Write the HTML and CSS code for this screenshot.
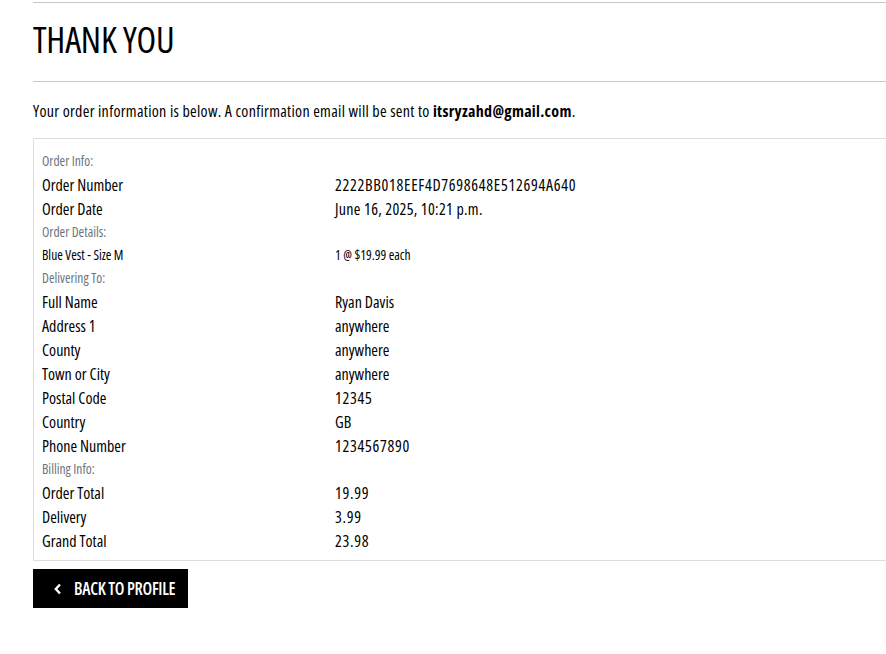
FILE: index.html
```html
<!DOCTYPE html>
<html>
<head>
<meta charset="utf-8">
<link rel="stylesheet" href="styles.css">
</head>
<body>
<div class="page">
  <hr class="rule rule-top">
  <h1 class="title">THANK YOU</h1>
  <hr class="rule rule-mid">
  <p class="intro">Your order information is below. A confirmation email will be sent to <strong>itsryzahd@gmail.com</strong>.</p>
  <div class="box">
    <div class="sec">Order Info:</div>
    <div class="row"><span class="k">Order Number</span><span class="v num">2222BB018EEF4D7698648E512694A640</span></div>
    <div class="row"><span class="k">Order Date</span><span class="v date">June 16, 2025, 10:21 p.m.</span></div>
    <div class="sec">Order Details:</div>
    <div class="row small"><span class="k">Blue Vest - Size M</span><span class="v">1 @ $19.99 each</span></div>
    <div class="sec">Delivering To:</div>
    <div class="row"><span class="k">Full Name</span><span class="v">Ryan Davis</span></div>
    <div class="row"><span class="k">Address 1</span><span class="v">anywhere</span></div>
    <div class="row"><span class="k">County</span><span class="v">anywhere</span></div>
    <div class="row"><span class="k">Town or City</span><span class="v">anywhere</span></div>
    <div class="row"><span class="k">Postal Code</span><span class="v num">12345</span></div>
    <div class="row"><span class="k">Country</span><span class="v">GB</span></div>
    <div class="row"><span class="k">Phone Number</span><span class="v num">1234567890</span></div>
    <div class="sec">Billing Info:</div>
    <div class="row"><span class="k">Order Total</span><span class="v num">19.99</span></div>
    <div class="row"><span class="k">Delivery</span><span class="v num">3.99</span></div>
    <div class="row"><span class="k">Grand Total</span><span class="v num">23.98</span></div>
  </div>
  <a class="btn" href="#"><svg class="chev" width="10" height="12" viewBox="0 0 10 12"><path d="M7 1.5 L2.8 6 L7 10.5" fill="none" stroke="#fff" stroke-width="2.4"/></svg><span>BACK TO PROFILE</span></a>
</div>
</body>
</html>
```
FILE: styles.css
```css
html, body {
  margin: 0;
  padding: 0;
  background: #fff;
}
body {
  font-family: "Open Sans", "Roboto Condensed", sans-serif;
  font-stretch: 75%;
  color: #000;
}
.page {
  padding-left: 33px;
}
.rule {
  border: 0;
  border-top: 1px solid #c8c8c8;
  margin: 0;
}
.rule-top {
  margin-top: 2px;
}
.title {
  margin: 0;
  padding: 16px 0 20px;
  font-size: 36px;
  font-weight: 500;
  line-height: 42px;
  letter-spacing: -0.2px;
}
.intro {
  margin: 0;
  padding: 19px 0 17px;
  font-size: 16px;
  line-height: 20px;
  letter-spacing: 0.3px;
}
.intro strong {
  font-weight: 700;
}
.box {
  border: 1px solid #dedede;
  border-right: 0;
  padding: 11px 0 7px 8px;
}
.sec {
  color: #6c757d;
  font-size: 13.5px;
  line-height: 23px;
}
.row {
  display: grid;
  grid-template-columns: 293px 1fr;
  font-size: 16px;
  line-height: 24px;
}
.row.small {
  font-size: 13.5px;
  line-height: 23px;
}
.num {
  letter-spacing: 0.7px;
}
.date {
  letter-spacing: 0.3px;
}
.btn {
  margin-top: 8px;
  display: inline-flex;
  align-items: center;
  gap: 11px;
  height: 39px;
  padding: 0 13px 0 20px;
  background: #000;
  color: #fff;
  text-decoration: none;
  font-size: 17px;
  font-weight: 600;
  letter-spacing: -0.3px;
}
.chev {
  display: block;
}
```
